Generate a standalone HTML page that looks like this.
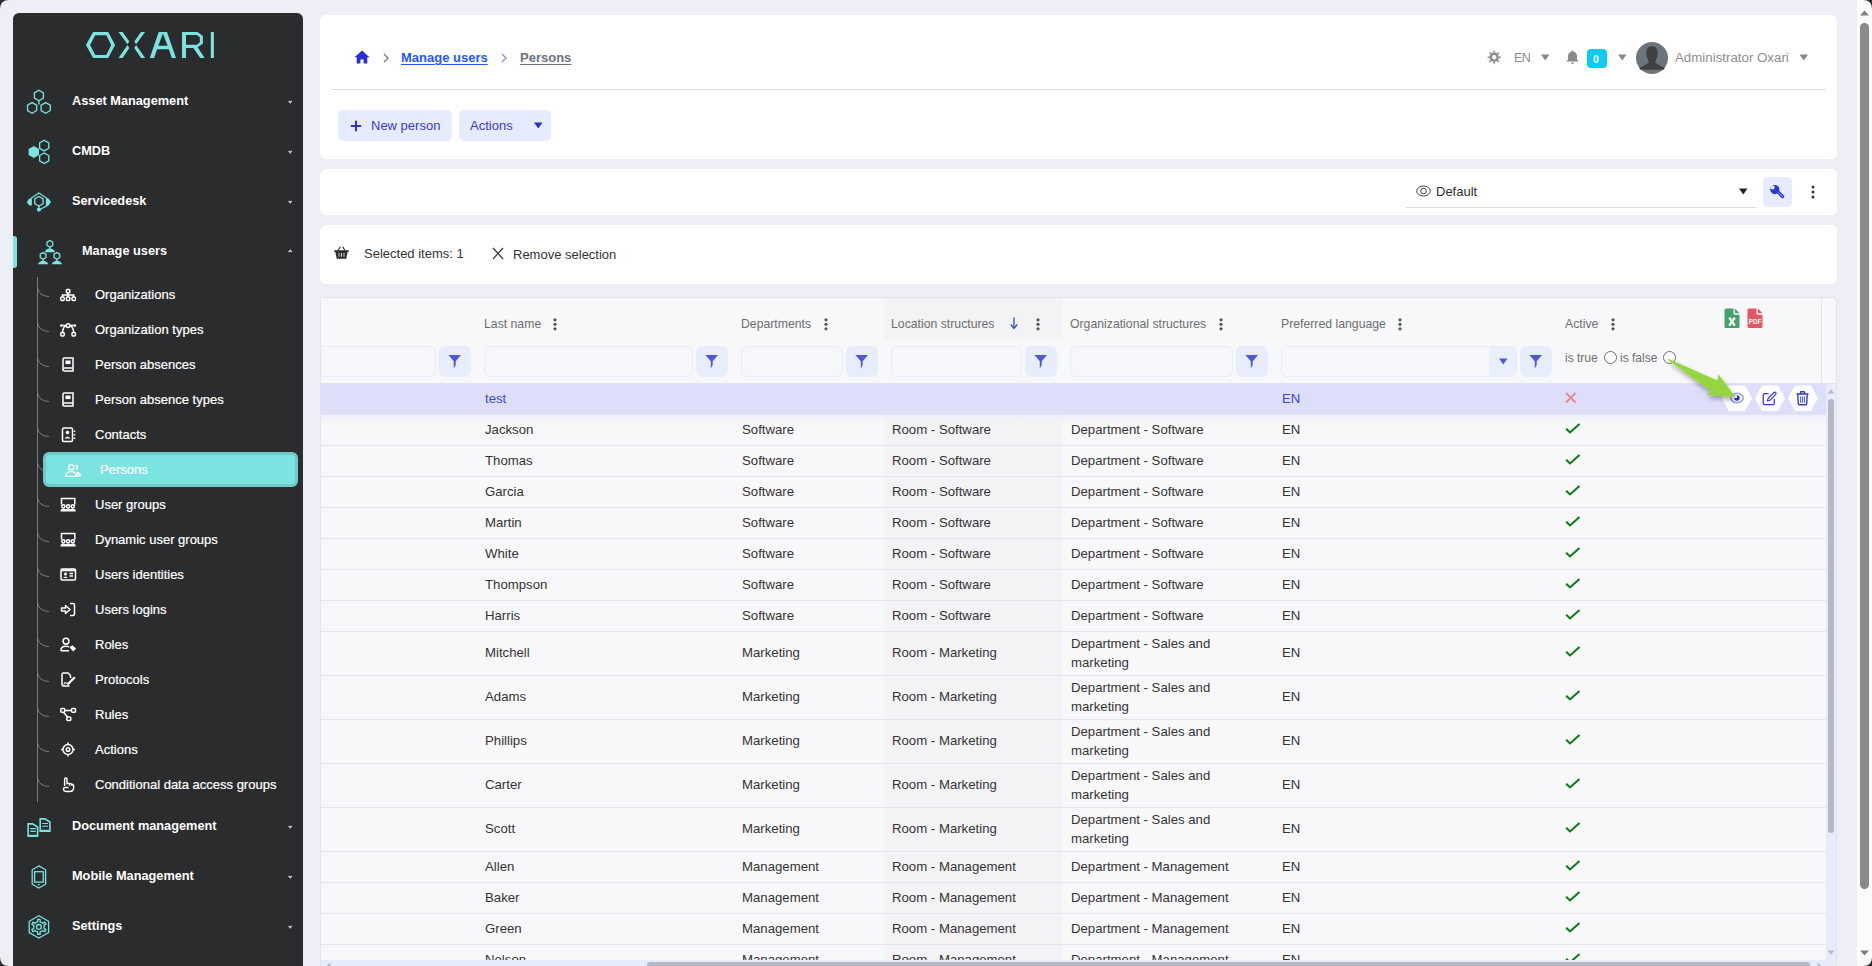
<!DOCTYPE html><html><head><meta charset='utf-8'><style>
*{box-sizing:border-box;margin:0;padding:0}
html,body{width:1872px;height:966px;overflow:hidden;background:#EEEEF6;font-family:'Liberation Sans',sans-serif}
.t{position:absolute;white-space:nowrap}
.a{position:absolute}
svg{position:absolute;overflow:visible}
</style></head><body>
<div class="a" style="left:13px;top:13px;width:290px;height:980px;background:#2B2C2E;border-radius:6px"></div>
<svg style="left:0;top:0" width="300" height="80"><path fill="#7BE3E0" fill-rule="evenodd" d="M93.1,32.05 H108.2 L115.1,45.1 L108.2,58.1 H93.1 L85.9,45.1 Z M95.2,35.2 L90.1,45.1 L95.2,54.9 H106.3 L111.2,45.1 L106.3,35.2 Z
M118.5,32.05 H122.6 L129.3,41.4 L127.5,44.2 Z M127.5,45 L129.3,48.1 L122.6,57.95 H118.5 Z
M145.1,32.05 H141.0 L134.3,41.4 L136.1,44.2 Z M136.1,45 L134.3,48.1 L141.0,57.95 H145.1 Z
M149.8,58 L158.7,31.9 H167 L176,58 H171.8 L168.8,49.3 H157.1 L154.1,58 Z M162.9,33.4 L167.6,45.7 H158.3 Z
M182,31.9 H197.5 L202.9,36.1 V43.6 L197.7,47.3 L204.7,58 H200.2 L193.3,48 H186 V58 H182 Z M186,35.1 H196.8 L199.8,37.3 V42.5 L196.8,44.7 H186 Z
M210.8,31.9 H213.9 V58 H210.8 Z"/></svg>
<div class="t" style="left:72px;top:94px;font-size:13px;line-height:13px;color:#FFFFFF;font-weight:bold;font-size:12.75px">Asset Management</div>
<svg style="left:288px;top:100px" width="5" height="4"><polyline points="0.7,0.9 2.2,2.6 3.7,0.9" fill="none" stroke="#cfcfcf" stroke-width="1.4"/></svg>
<div class="t" style="left:72px;top:144px;font-size:13px;line-height:13px;color:#FFFFFF;font-weight:bold;font-size:12.75px">CMDB</div>
<svg style="left:288px;top:150px" width="5" height="4"><polyline points="0.7,0.9 2.2,2.6 3.7,0.9" fill="none" stroke="#cfcfcf" stroke-width="1.4"/></svg>
<div class="t" style="left:72px;top:194px;font-size:13px;line-height:13px;color:#FFFFFF;font-weight:bold;font-size:12.75px">Servicedesk</div>
<svg style="left:288px;top:200px" width="5" height="4"><polyline points="0.7,0.9 2.2,2.6 3.7,0.9" fill="none" stroke="#cfcfcf" stroke-width="1.4"/></svg>
<div class="t" style="left:72px;top:819px;font-size:13px;line-height:13px;color:#FFFFFF;font-weight:bold;font-size:12.75px">Document management</div>
<svg style="left:288px;top:825px" width="5" height="4"><polyline points="0.7,0.9 2.2,2.6 3.7,0.9" fill="none" stroke="#cfcfcf" stroke-width="1.4"/></svg>
<div class="t" style="left:72px;top:869px;font-size:13px;line-height:13px;color:#FFFFFF;font-weight:bold;font-size:12.75px">Mobile Management</div>
<svg style="left:288px;top:875px" width="5" height="4"><polyline points="0.7,0.9 2.2,2.6 3.7,0.9" fill="none" stroke="#cfcfcf" stroke-width="1.4"/></svg>
<div class="t" style="left:72px;top:919px;font-size:13px;line-height:13px;color:#FFFFFF;font-weight:bold;font-size:12.75px">Settings</div>
<svg style="left:288px;top:925px" width="5" height="4"><polyline points="0.7,0.9 2.2,2.6 3.7,0.9" fill="none" stroke="#cfcfcf" stroke-width="1.4"/></svg>
<svg style="left:0;top:0" width="80" height="120"><g fill="none" stroke="#7BE3E0" stroke-width="1.3"><polygon points="43.40,98.10 38.90,100.70 34.40,98.10 34.40,92.90 38.90,90.30 43.40,92.90"/><polygon points="36.69,110.55 32.10,113.20 27.51,110.55 27.51,105.25 32.10,102.60 36.69,105.25"/><polygon points="50.29,110.55 45.70,113.20 41.11,110.55 41.11,105.25 45.70,102.60 50.29,105.25"/><path d="M38.9,100.7 V104.5"/></g></svg>
<svg style="left:0;top:0" width="80" height="170"><polygon points="39.00,154.90 33.80,157.90 28.60,154.90 28.60,148.90 33.80,145.90 39.00,148.90" fill="#7BE3E0"/><g fill="none" stroke="#7BE3E0" stroke-width="1.3"><polygon points="48.79,148.25 44.20,150.90 39.61,148.25 39.61,142.95 44.20,140.30 48.79,142.95"/><polygon points="48.79,160.85 44.20,163.50 39.61,160.85 39.61,155.55 44.20,152.90 48.79,155.55"/></g></svg>
<svg style="left:0;top:0" width="80" height="230"><g fill="none" stroke="#7BE3E0" stroke-width="1.3"><polyline points="30.8,198.5 38.9,193 47.2,198.5 47.2,205.5 38.9,210"/><polygon points="43.06,203.70 38.90,206.10 34.74,203.70 34.74,198.90 38.90,196.50 43.06,198.90"/><path d="M38.9,206 V209"/></g><g fill="#7BE3E0"><path d="M26.8,201.9 L29.3,198.4 H31.9 V205.4 H29.3z"/><path d="M51,201.9 L48.5,198.4 H45.9 V205.4 H48.5z"/><polygon points="40.81,210.70 38.90,211.80 36.99,210.70 36.99,208.50 38.90,207.40 40.81,208.50"/></g></svg>
<svg style="left:0;top:0" width="80" height="280"><g fill="none" stroke="#7BE3E0" stroke-width="1.3"><polygon points="52.76,245.45 49.90,247.10 47.04,245.45 47.04,242.15 49.90,240.50 52.76,242.15"/><polygon points="45.96,257.55 43.10,259.20 40.24,257.55 40.24,254.25 43.10,252.60 45.96,254.25"/><polygon points="59.76,257.55 56.90,259.20 54.04,257.55 54.04,254.25 56.90,252.60 59.76,254.25"/><path d="M49.9,247 V249 M43.1,259 V261 M56.9,259 V261"/></g><g fill="#7BE3E0"><path d="M44.6,252.2 Q46,248.6 49.9,248.6 Q53.8,248.6 55.2,252.2z"/><path d="M37.9,264.3 Q39.3,260.7 43.1,260.7 Q46.9,260.7 48.3,264.3z"/><path d="M51.7,264.3 Q53.1,260.7 56.9,260.7 Q60.7,260.7 62.1,264.3z"/></g></svg>
<svg style="left:0;top:0" width="80" height="850"><g fill="none" stroke="#7BE3E0" stroke-width="1.6"><path d="M28.1,823.9 H32.5 L37.6,827 V836 H28.1z"/><path d="M40.2,818.9 H44.8 L49.9,822 V831.1 H40.2z"/></g><path d="M28.1,835.8 H37.6" stroke="#7BE3E0" stroke-width="2"/><path d="M40.2,830.8 H49.9" stroke="#7BE3E0" stroke-width="2"/><g stroke="#7BE3E0" stroke-width="1.1"><path d="M30.3,828.6 H35.8 M30.3,831.4 H35.8 M42.2,823.5 H48 M42.2,826.3 H48"/></g></svg>
<svg style="left:0;top:0" width="80" height="900"><g fill="none" stroke="#7BE3E0" stroke-width="1.3"><polygon points="38.9,865.9 45.6,869.8 45.6,884.2 38.9,888 32.2,884.2 32.2,869.8"/><rect x="34.6" y="871.7" width="8.7" height="10.4"/></g><rect x="37.8" y="884" width="2.2" height="1.2" rx="0.6" fill="#7BE3E0"/></svg>
<svg style="left:0;top:0" width="80" height="950"><g fill="none" stroke="#7BE3E0" stroke-width="1.3"><polygon points="48.60,932.50 38.90,938.10 29.20,932.50 29.20,921.30 38.90,915.70 48.60,921.30"/><path d="M36.88,922.11 L37.71,921.84 L37.71,919.39 L40.09,919.39 L40.09,921.84 L40.92,922.11 L42.04,922.76 L42.69,923.34 L44.81,922.12 L46.00,924.18 L43.88,925.40 L44.06,926.25 L44.06,927.55 L43.88,928.40 L46.00,929.62 L44.81,931.68 L42.69,930.46 L42.04,931.04 L40.92,931.69 L40.09,931.96 L40.09,934.41 L37.71,934.41 L37.71,931.96 L36.88,931.69 L35.76,931.04 L35.11,930.46 L32.99,931.68 L31.80,929.62 L33.92,928.40 L33.74,927.55 L33.74,926.25 L33.92,925.40 L31.80,924.18 L32.99,922.12 L35.11,923.34 L35.76,922.76 Z" stroke-linejoin="round"/><circle cx="38.9" cy="926.9" r="2.4"/></g></svg>
<div class="a" style="left:13px;top:236px;width:4px;height:32px;background:#7BE3E0;border-radius:0 3px 3px 0"></div>
<div class="t" style="left:82px;top:244px;font-size:13px;line-height:13px;color:#FFFFFF;font-weight:bold;font-size:12.75px">Manage users</div>
<svg style="left:288px;top:249px" width="5" height="4"><polyline points="0.7,3.1 2.2,1.4 3.7,3.1" fill="none" stroke="#cfcfcf" stroke-width="1.4"/></svg>
<div class="a" style="left:37px;top:277px;width:1px;height:525px;background:#7C7C7E"></div>
<svg style="left:37px;top:286px" width="14" height="12"><path d="M0.5,1.5 Q1.5,10 12,10.6" fill="none" stroke="#7C7C7E" stroke-width="1"/></svg>
<div class="t" style="left:95px;top:288px;font-size:13px;line-height:13px;color:#FFFFFF;-webkit-text-stroke:0.2px #FFFFFF">Organizations</div>
<svg style="left:37px;top:321px" width="14" height="12"><path d="M0.5,1.5 Q1.5,10 12,10.6" fill="none" stroke="#7C7C7E" stroke-width="1"/></svg>
<div class="t" style="left:95px;top:323px;font-size:13px;line-height:13px;color:#FFFFFF;-webkit-text-stroke:0.2px #FFFFFF">Organization types</div>
<svg style="left:37px;top:356px" width="14" height="12"><path d="M0.5,1.5 Q1.5,10 12,10.6" fill="none" stroke="#7C7C7E" stroke-width="1"/></svg>
<div class="t" style="left:95px;top:358px;font-size:13px;line-height:13px;color:#FFFFFF;-webkit-text-stroke:0.2px #FFFFFF">Person absences</div>
<svg style="left:37px;top:391px" width="14" height="12"><path d="M0.5,1.5 Q1.5,10 12,10.6" fill="none" stroke="#7C7C7E" stroke-width="1"/></svg>
<div class="t" style="left:95px;top:393px;font-size:13px;line-height:13px;color:#FFFFFF;-webkit-text-stroke:0.2px #FFFFFF">Person absence types</div>
<svg style="left:37px;top:426px" width="14" height="12"><path d="M0.5,1.5 Q1.5,10 12,10.6" fill="none" stroke="#7C7C7E" stroke-width="1"/></svg>
<div class="t" style="left:95px;top:428px;font-size:13px;line-height:13px;color:#FFFFFF;-webkit-text-stroke:0.2px #FFFFFF">Contacts</div>
<svg style="left:37px;top:461px" width="14" height="12"><path d="M0.5,1.5 Q1.5,10 12,10.6" fill="none" stroke="#7C7C7E" stroke-width="1"/></svg>
<div class="a" style="left:43px;top:452px;width:255px;height:35px;background:#7BE3E0;border:3px solid #6FCBC7;border-radius:6px"></div>
<div class="t" style="left:100px;top:463px;font-size:13px;line-height:13px;color:#FFFFFF;-webkit-text-stroke:0.2px #FFFFFF">Persons</div>
<svg style="left:37px;top:496px" width="14" height="12"><path d="M0.5,1.5 Q1.5,10 12,10.6" fill="none" stroke="#7C7C7E" stroke-width="1"/></svg>
<div class="t" style="left:95px;top:498px;font-size:13px;line-height:13px;color:#FFFFFF;-webkit-text-stroke:0.2px #FFFFFF">User groups</div>
<svg style="left:37px;top:531px" width="14" height="12"><path d="M0.5,1.5 Q1.5,10 12,10.6" fill="none" stroke="#7C7C7E" stroke-width="1"/></svg>
<div class="t" style="left:95px;top:533px;font-size:13px;line-height:13px;color:#FFFFFF;-webkit-text-stroke:0.2px #FFFFFF">Dynamic user groups</div>
<svg style="left:37px;top:566px" width="14" height="12"><path d="M0.5,1.5 Q1.5,10 12,10.6" fill="none" stroke="#7C7C7E" stroke-width="1"/></svg>
<div class="t" style="left:95px;top:568px;font-size:13px;line-height:13px;color:#FFFFFF;-webkit-text-stroke:0.2px #FFFFFF">Users identities</div>
<svg style="left:37px;top:601px" width="14" height="12"><path d="M0.5,1.5 Q1.5,10 12,10.6" fill="none" stroke="#7C7C7E" stroke-width="1"/></svg>
<div class="t" style="left:95px;top:603px;font-size:13px;line-height:13px;color:#FFFFFF;-webkit-text-stroke:0.2px #FFFFFF">Users logins</div>
<svg style="left:37px;top:636px" width="14" height="12"><path d="M0.5,1.5 Q1.5,10 12,10.6" fill="none" stroke="#7C7C7E" stroke-width="1"/></svg>
<div class="t" style="left:95px;top:638px;font-size:13px;line-height:13px;color:#FFFFFF;-webkit-text-stroke:0.2px #FFFFFF">Roles</div>
<svg style="left:37px;top:671px" width="14" height="12"><path d="M0.5,1.5 Q1.5,10 12,10.6" fill="none" stroke="#7C7C7E" stroke-width="1"/></svg>
<div class="t" style="left:95px;top:673px;font-size:13px;line-height:13px;color:#FFFFFF;-webkit-text-stroke:0.2px #FFFFFF">Protocols</div>
<svg style="left:37px;top:706px" width="14" height="12"><path d="M0.5,1.5 Q1.5,10 12,10.6" fill="none" stroke="#7C7C7E" stroke-width="1"/></svg>
<div class="t" style="left:95px;top:708px;font-size:13px;line-height:13px;color:#FFFFFF;-webkit-text-stroke:0.2px #FFFFFF">Rules</div>
<svg style="left:37px;top:741px" width="14" height="12"><path d="M0.5,1.5 Q1.5,10 12,10.6" fill="none" stroke="#7C7C7E" stroke-width="1"/></svg>
<div class="t" style="left:95px;top:743px;font-size:13px;line-height:13px;color:#FFFFFF;-webkit-text-stroke:0.2px #FFFFFF">Actions</div>
<svg style="left:37px;top:776px" width="14" height="12"><path d="M0.5,1.5 Q1.5,10 12,10.6" fill="none" stroke="#7C7C7E" stroke-width="1"/></svg>
<div class="t" style="left:95px;top:778px;font-size:13px;line-height:13px;color:#FFFFFF;-webkit-text-stroke:0.2px #FFFFFF">Conditional data access groups</div>
<svg style="left:60px;top:287px" width="17" height="16"><g fill="none" stroke="#FFFFFF" stroke-width="1.5"><rect x="6.4" y="2.6" width="3.4" height="3.4" rx="0.9"/><rect x="0.8" y="10" width="3.4" height="3.4" rx="0.9"/><rect x="6.4" y="10" width="3.4" height="3.4" rx="0.9"/><rect x="12" y="10" width="3.4" height="3.4" rx="0.9"/><path d="M8.1,6 V10 M2.5,10 V8 H13.7 V10"/></g></svg>
<svg style="left:60px;top:322px" width="17" height="16"><g fill="none" stroke="#FFFFFF" stroke-width="1.5"><rect x="0.8" y="10.5" width="3.4" height="3.4" rx="0.9"/><rect x="12" y="10.5" width="3.4" height="3.4" rx="0.9"/><circle cx="8.1" cy="3.6" r="1.9"/><path d="M2.5,10.5 Q2.8,5 6.2,3.6 M13.7,10.5 Q13.4,5 10,3.6 M1.5,3.6 H6.2 M10,3.6 H14.7"/></g><circle cx="1.3" cy="3.6" r="1.3" fill="#FFFFFF"/><circle cx="14.9" cy="3.6" r="1.3" fill="#FFFFFF"/></svg>
<svg style="left:60px;top:357px" width="17" height="16"><g fill="none" stroke="#FFFFFF" stroke-width="1.5"><path d="M3,14 V2.3 Q3,1 4.3,1 H13 V11 H4.5 Q3,11 3,12.5 Q3,14 4.5,14 H13 V11"/></g><rect x="5.5" y="3.5" width="5" height="3.6" fill="#FFFFFF"/></svg>
<svg style="left:60px;top:392px" width="17" height="16"><g fill="none" stroke="#FFFFFF" stroke-width="1.5"><path d="M3,14 V2.3 Q3,1 4.3,1 H13 V11 H4.5 Q3,11 3,12.5 Q3,14 4.5,14 H13 V11"/></g><rect x="5.5" y="3.5" width="5" height="3.6" fill="#FFFFFF"/></svg>
<svg style="left:60px;top:427px" width="17" height="16"><g fill="none" stroke="#FFFFFF" stroke-width="1.5"><rect x="2.5" y="1" width="10" height="13.5" rx="1.2"/><path d="M14.5,3.5 V5 M14.5,7 V8.5 M14.5,10.5 V12"/></g><circle cx="7.5" cy="5.6" r="1.8" fill="#FFFFFF"/><path d="M4.5,11.5 Q7.5,7.5 10.5,11.5z" fill="#FFFFFF"/></svg>
<svg style="left:65px;top:463px" width="17" height="16"><path d="M10.6,1.5 A2.7,2.7 0 1 1 10.6,6.9 Q11.7,4.2 10.6,1.5z" fill="#FFFFFF"/><path d="M11.8,8.6 Q15.8,9 16.2,13.4 H12.3 Q12.2,10.5 11.8,8.6z" fill="#FFFFFF"/><g fill="none" stroke="#FFFFFF" stroke-width="1.4"><circle cx="6.2" cy="4.2" r="2.6"/><path d="M0.8,13.4 Q0.8,8.6 6.2,8.6 Q11.6,8.6 11.6,13.4z"/></g></svg>
<svg style="left:60px;top:497px" width="17" height="16"><g fill="none" stroke="#FFFFFF" stroke-width="1.5"><path d="M1.5,7.5 V1.5 H14.8 V7.5"/><circle cx="3.4" cy="9.3" r="1.6"/><circle cx="8.1" cy="9.3" r="1.6"/><circle cx="12.8" cy="9.3" r="1.6"/></g><g fill="#FFFFFF"><path d="M0.4,14.5 Q0.4,11.4 3.4,11.4 Q6.4,11.4 6.4,14.5z M5.1,14.5 Q5.1,11.4 8.1,11.4 Q11.1,11.4 11.1,14.5z M9.8,14.5 Q9.8,11.4 12.8,11.4 Q15.8,11.4 15.8,14.5z"/></g></svg>
<svg style="left:60px;top:532px" width="17" height="16"><g fill="none" stroke="#FFFFFF" stroke-width="1.5"><path d="M1.5,7.5 V1.5 H14.8 V7.5"/><circle cx="3.4" cy="9.3" r="1.6"/><circle cx="8.1" cy="9.3" r="1.6"/><circle cx="12.8" cy="9.3" r="1.6"/></g><g fill="#FFFFFF"><path d="M0.4,14.5 Q0.4,11.4 3.4,11.4 Q6.4,11.4 6.4,14.5z M5.1,14.5 Q5.1,11.4 8.1,11.4 Q11.1,11.4 11.1,14.5z M9.8,14.5 Q9.8,11.4 12.8,11.4 Q15.8,11.4 15.8,14.5z"/></g></svg>
<svg style="left:60px;top:567px" width="17" height="16"><g fill="none" stroke="#FFFFFF" stroke-width="1.5"><rect x="1" y="2" width="14.5" height="11" rx="1.2"/></g><rect x="1" y="2" width="14.5" height="2.3" fill="#FFFFFF"/><circle cx="5.5" cy="7" r="1.5" fill="#FFFFFF"/><path d="M3,11 Q5.5,8 8,11z" fill="#FFFFFF"/><path d="M9.5,6.5 H13 M9.5,9 H13" stroke="#FFFFFF" stroke-width="1.3"/></svg>
<svg style="left:60px;top:602px" width="17" height="16"><g fill="none" stroke="#FFFFFF" stroke-width="1.5"><path d="M10,1.5 H13 Q14.5,1.5 14.5,3 V12 Q14.5,13.5 13,13.5 H10"/><path d="M1.5,6 H5.5 V3.5 L10,7.5 L5.5,11.5 V9 H1.5z" stroke-linejoin="round"/></g></svg>
<svg style="left:60px;top:637px" width="17" height="16"><g fill="none" stroke="#FFFFFF" stroke-width="1.5"><circle cx="6" cy="4.2" r="2.9"/><path d="M0.8,13.8 Q0.8,9.2 6,9.2 Q8,9.2 9.2,9.8 M0.8,13.8 H9"/></g><path d="M9.5,10.2 L12.2,8.2 L16.2,11.6 L13.2,14.6z" fill="#FFFFFF"/></svg>
<svg style="left:60px;top:672px" width="17" height="16"><g fill="none" stroke="#FFFFFF" stroke-width="1.5"><path d="M9.5,14 H3.5 Q2,14 2,12.5 V2.5 Q2,1 3.5,1 H8 L10.5,3.5 V6"/></g><path d="M7.5,12.5 L14.8,5.2" stroke="#FFFFFF" stroke-width="2.3"/><path d="M3.8,12.5 Q5,9.5 6.2,11 Q7,12 8,11" fill="none" stroke="#FFFFFF" stroke-width="1.1"/></svg>
<svg style="left:60px;top:707px" width="17" height="16"><g fill="none" stroke="#FFFFFF" stroke-width="1.5"><rect x="0.8" y="1.6" width="4" height="3.6" rx="1"/><rect x="11.5" y="1.6" width="4" height="3.6" rx="1"/><rect x="6.8" y="10" width="4" height="3.6" rx="1"/><path d="M4.8,3.4 H11.5 M3.5,5.2 L7.5,10"/></g></svg>
<svg style="left:60px;top:742px" width="17" height="16"><g fill="none" stroke="#FFFFFF" stroke-width="1.5"><circle cx="8" cy="7.5" r="5"/><circle cx="8" cy="7.5" r="1.8"/><path d="M8,0.5 V2.5 M8,12.5 V14.5 M1,7.5 H3 M13,7.5 H15"/></g></svg>
<svg style="left:60px;top:777px" width="17" height="16"><g fill="none" stroke="#FFFFFF" stroke-width="1.4"><path d="M4.6,9 V2.3 Q4.6,1 5.8,1 Q7,1 7,2.3 V6.5 Q8.5,6 9.5,6.8 Q11,6.3 12,7.3 Q13.6,7.2 13.6,9 V11 Q13.6,14.5 9.5,14.5 H7 Q3.4,14.5 3.4,12 Q3.4,10.5 5,10.5 H8.5"/><path d="M9.5,6.8 V8.8 M12,7.3 V9"/></g></svg>
<div class="a" style="left:320px;top:15px;width:1517px;height:144px;background:#FFFFFF;border-radius:6px"></div>
<svg style="left:354px;top:50px" width="16" height="14"><path d="M8,0.5 L15.5,7.2 H13.3 V13.5 H9.6 V9.5 H6.4 V13.5 H2.7 V7.2 H0.5z" fill="#2B2FD4"/></svg>
<svg style="left:383px;top:53px" width="6" height="10"><polyline points="1,1 5,5 1,9" fill="none" stroke="#777" stroke-width="1.3"/></svg>
<div class="t" style="left:401px;top:51px;font-size:13px;line-height:13px;color:#1F5AF6;font-weight:bold;text-decoration:underline;text-underline-offset:2px">Manage users</div>
<svg style="left:501px;top:53px" width="6" height="10"><polyline points="1,1 5,5 1,9" fill="none" stroke="#8B8BEA" stroke-width="1.3"/></svg>
<div class="t" style="left:520px;top:51px;font-size:13px;line-height:13px;color:#69727D;font-weight:bold;text-decoration:underline;text-underline-offset:2px">Persons</div>
<div class="a" style="left:331px;top:89px;width:1495px;height:1px;background:#DCDFE4"></div>
<svg style="left:1487px;top:50px" width="15" height="15"><g fill="#8A8A8A"><circle cx="7.2" cy="7.2" r="4.6"/><path d="M7.2,0 L8.5,2.5 L5.9,2.5z M7.2,14.4 L8.5,11.9 L5.9,11.9z M0,7.2 L2.5,5.9 L2.5,8.5z M14.4,7.2 L11.9,5.9 L11.9,8.5z M2.1,2.1 L4.8,2.9 L2.9,4.8z M12.3,12.3 L9.6,11.5 L11.5,9.6z M12.3,2.1 L11.5,4.8 L9.6,2.9z M2.1,12.3 L2.9,9.6 L4.8,11.5z"/></g><circle cx="7.2" cy="7.2" r="2.2" fill="#fff"/></svg>
<div class="t" style="left:1514px;top:52px;font-size:13px;line-height:13px;color:#8C8C8C;font-size:12.5px;letter-spacing:-0.6px">EN</div>
<svg style="left:1541px;top:54px" width="9" height="7"><polygon points="0,0.5 8.5,0.5 4.25,6.5" fill="#888"/></svg>
<svg style="left:1566px;top:50px" width="13" height="15"><path d="M6.5,0.5 Q7.5,0.5 7.5,1.6 Q11,2.5 11,6.5 V9.5 L12.5,11.5 H0.5 L2,9.5 V6.5 Q2,2.5 5.5,1.6 Q5.5,0.5 6.5,0.5z M5,12.5 H8 Q8,14 6.5,14 Q5,14 5,12.5z" fill="#8A8A8A"/></svg>
<div class="a" style="left:1587px;top:49px;width:20px;height:19px;background:#0DCAF0;border-radius:4px"></div>
<div class="t" style="left:1593px;top:53px;font-size:12px;line-height:12px;color:#FFFFFF;font-weight:bold;font-size:10.5px">0</div>
<svg style="left:1618px;top:54px" width="9" height="7"><polygon points="0,0.5 8.5,0.5 4.25,6.5" fill="#888"/></svg>
<svg style="left:1636px;top:42px" width="32" height="32"><circle cx="16" cy="16" r="16" fill="#6C747C"/><path d="M16,3.9 Q21.7,3.9 21.7,11 Q21.7,14.5 20.5,16.5 Q19.5,18.5 19.3,20.8 L28.8,26.2 Q28,27 27.4,27.7 H4.6 Q4,27 3.2,26.2 L12.7,20.8 Q12.5,18.5 11.5,16.5 Q10.3,14.5 10.3,11 Q10.3,3.9 16,3.9z" fill="#404040"/></svg>
<div class="t" style="left:1675px;top:51px;font-size:13px;line-height:13px;color:#8E8E8E;font-size:13.3px">Administrator Oxari</div>
<svg style="left:1799px;top:54px" width="10" height="7"><polygon points="0.5,0.5 9,0.5 4.75,6.5" fill="#888"/></svg>
<div class="a" style="left:338px;top:110px;width:114px;height:31px;background:#E6EBFD;border-radius:5px"></div>
<svg style="left:350px;top:120px" width="12" height="12"><path d="M6,0.8 V11.2 M0.8,6 H11.2" stroke="#2D31C8" stroke-width="2"/></svg>
<div class="t" style="left:371px;top:119px;font-size:13px;line-height:13px;color:#3B3BC6;">New person</div>
<div class="a" style="left:459px;top:110px;width:92px;height:31px;background:#E6EBFD;border-radius:5px"></div>
<div class="t" style="left:470px;top:119px;font-size:13px;line-height:13px;color:#3B3BC6;">Actions</div>
<svg style="left:534px;top:122px" width="9" height="7"><polygon points="0,0.5 8.5,0.5 4.25,6.5" fill="#2D31C8"/></svg>
<div class="a" style="left:320px;top:169px;width:1517px;height:46px;background:#FFFFFF;border-radius:6px"></div>
<svg style="left:1416px;top:185px" width="16" height="13"><ellipse cx="7.5" cy="6" rx="6.8" ry="5" fill="none" stroke="#444" stroke-width="1"/><circle cx="7.5" cy="6" r="2.8" fill="none" stroke="#444" stroke-width="1"/></svg>
<div class="t" style="left:1436px;top:185px;font-size:13px;line-height:13px;color:#2E2E2E;">Default</div>
<svg style="left:1739px;top:188px" width="9" height="7"><polygon points="0,0.5 8.5,0.5 4.25,6.5" fill="#222"/></svg>
<div class="a" style="left:1406px;top:207px;width:350px;height:1px;background:#D9DCE1"></div>
<div class="a" style="left:1763px;top:177px;width:29px;height:30px;background:#E6EBFD;border-radius:5px"></div>
<svg style="left:1769px;top:184px" width="17" height="17"><path d="M8.2,8.6 L12.7,13.3 Q13.5,14.1 14.3,13.3 Q15.1,12.5 14.3,11.7 L9.6,7.2" fill="#8A90E4" stroke="#2E36D0" stroke-width="1.2"/><circle cx="5.8" cy="5.6" r="4.6" fill="#2E36D0"/><circle cx="3.6" cy="3.4" r="2" fill="#E6EBFD"/></svg>
<svg style="left:1811px;top:185px" width="4" height="14"><circle cx="2" cy="2" r="1.5" fill="#333"/><circle cx="2" cy="7" r="1.5" fill="#333"/><circle cx="2" cy="12" r="1.5" fill="#333"/></svg>
<div class="a" style="left:320px;top:225px;width:1517px;height:59px;background:#FFFFFF;border-radius:6px"></div>
<svg style="left:334px;top:246px" width="15" height="14"><path d="M4,4.5 L6.3,0.8 M11,4.5 L8.7,0.8" stroke="#2A2D33" stroke-width="1.1" fill="none"/><path d="M0.3,4.2 H14.7 V6 H13.6 L12.3,12.7 H2.7 L1.4,6 H0.3z" fill="#2A2D33"/><path d="M5,7 V10.8 M7.5,7 V10.8 M10,7 V10.8" stroke="#E3D9A8" stroke-width="1"/></svg>
<div class="t" style="left:364px;top:247px;font-size:13px;line-height:13px;color:#333;">Selected items: 1</div>
<svg style="left:492px;top:247px" width="12" height="13"><path d="M1,1 L11,12 M11,1 L1,12" stroke="#333" stroke-width="1.2"/></svg>
<div class="t" style="left:513px;top:248px;font-size:13px;line-height:13px;color:#333;">Remove selection</div>
<div class="a" style="left:320px;top:297px;width:1517px;height:700px;background:#F8F8FA;border:1px solid #E1E3E8;border-radius:5px 5px 0 0"></div>
<div class="a" style="left:321px;top:298px;width:1505px;height:85px;background:#F7F8FA"></div>
<div class="a" style="left:884px;top:298px;width:179px;height:41px;background:#F2F3F5"></div>
<div class="a" style="left:1821px;top:298px;width:1px;height:85px;background:#E3E4E8"></div>
<div class="a" style="left:321px;top:383px;width:1515px;height:1px;background:#E2E3E7"></div>
<div class="t" style="left:484px;top:318px;font-size:12px;line-height:12px;color:#6E6E6E;font-size:12.25px">Last name</div>
<svg style="left:553px;top:318px" width="4" height="13"><circle cx="2" cy="1.8" r="1.6" fill="#555"/><circle cx="2" cy="6.3" r="1.6" fill="#555"/><circle cx="2" cy="10.8" r="1.6" fill="#555"/></svg>
<div class="t" style="left:741px;top:318px;font-size:12px;line-height:12px;color:#6E6E6E;font-size:12.25px">Departments</div>
<svg style="left:824px;top:318px" width="4" height="13"><circle cx="2" cy="1.8" r="1.6" fill="#555"/><circle cx="2" cy="6.3" r="1.6" fill="#555"/><circle cx="2" cy="10.8" r="1.6" fill="#555"/></svg>
<div class="t" style="left:891px;top:318px;font-size:12px;line-height:12px;color:#6E6E6E;font-size:12.25px">Location structures</div>
<svg style="left:1036px;top:318px" width="4" height="13"><circle cx="2" cy="1.8" r="1.6" fill="#555"/><circle cx="2" cy="6.3" r="1.6" fill="#555"/><circle cx="2" cy="10.8" r="1.6" fill="#555"/></svg>
<div class="t" style="left:1070px;top:318px;font-size:12px;line-height:12px;color:#6E6E6E;font-size:12.25px">Organizational structures</div>
<svg style="left:1219px;top:318px" width="4" height="13"><circle cx="2" cy="1.8" r="1.6" fill="#555"/><circle cx="2" cy="6.3" r="1.6" fill="#555"/><circle cx="2" cy="10.8" r="1.6" fill="#555"/></svg>
<div class="t" style="left:1281px;top:318px;font-size:12px;line-height:12px;color:#6E6E6E;font-size:12.25px">Preferred language</div>
<svg style="left:1398px;top:318px" width="4" height="13"><circle cx="2" cy="1.8" r="1.6" fill="#555"/><circle cx="2" cy="6.3" r="1.6" fill="#555"/><circle cx="2" cy="10.8" r="1.6" fill="#555"/></svg>
<div class="t" style="left:1565px;top:318px;font-size:12px;line-height:12px;color:#6E6E6E;font-size:12.25px">Active</div>
<svg style="left:1611px;top:318px" width="4" height="13"><circle cx="2" cy="1.8" r="1.6" fill="#555"/><circle cx="2" cy="6.3" r="1.6" fill="#555"/><circle cx="2" cy="10.8" r="1.6" fill="#555"/></svg>
<svg style="left:1010px;top:317px" width="8" height="13"><path d="M4,0.5 V11" stroke="#3A46D6" stroke-width="1.3"/><path d="M0.8,7.5 L4,11.5 L7.2,7.5" fill="none" stroke="#3A46D6" stroke-width="1.3"/></svg>
<div class="a" style="left:321px;top:346px;width:115px;height:31px;background:#F5F7FB;border:1px solid #E6ECFB;border-left:none;border-radius:0 6px 6px 0"></div>
<div class="a" style="left:439px;top:346px;width:32px;height:31px;background:#E8EDFC;border-radius:6px"></div>
<svg style="left:448px;top:354px" width="15" height="16"><path d="M0.4,1 H13 L7.7,7.2 V11 L5.8,14.4 V7.2z" fill="#4E58D8"/></svg>
<div class="a" style="left:484px;top:346px;width:209px;height:31px;background:#F5F7FB;border:1px solid #E6ECFB;border-radius:6px"></div>
<div class="a" style="left:696px;top:346px;width:32px;height:31px;background:#E8EDFC;border-radius:6px"></div>
<svg style="left:705px;top:354px" width="15" height="16"><path d="M0.4,1 H13 L7.7,7.2 V11 L5.8,14.4 V7.2z" fill="#4E58D8"/></svg>
<div class="a" style="left:741px;top:346px;width:102px;height:31px;background:#F5F7FB;border:1px solid #E6ECFB;border-radius:6px"></div>
<div class="a" style="left:846px;top:346px;width:32px;height:31px;background:#E8EDFC;border-radius:6px"></div>
<svg style="left:855px;top:354px" width="15" height="16"><path d="M0.4,1 H13 L7.7,7.2 V11 L5.8,14.4 V7.2z" fill="#4E58D8"/></svg>
<div class="a" style="left:891px;top:346px;width:131px;height:31px;background:#F5F7FB;border:1px solid #E6ECFB;border-radius:6px"></div>
<div class="a" style="left:1025px;top:346px;width:32px;height:31px;background:#E8EDFC;border-radius:6px"></div>
<svg style="left:1034px;top:354px" width="15" height="16"><path d="M0.4,1 H13 L7.7,7.2 V11 L5.8,14.4 V7.2z" fill="#4E58D8"/></svg>
<div class="a" style="left:1070px;top:346px;width:163px;height:31px;background:#F5F7FB;border:1px solid #E6ECFB;border-radius:6px"></div>
<div class="a" style="left:1236px;top:346px;width:32px;height:31px;background:#E8EDFC;border-radius:6px"></div>
<svg style="left:1245px;top:354px" width="15" height="16"><path d="M0.4,1 H13 L7.7,7.2 V11 L5.8,14.4 V7.2z" fill="#4E58D8"/></svg>
<div class="a" style="left:1281px;top:346px;width:236px;height:31px;background:#F5F7FB;border:1px solid #E6ECFB;border-radius:6px"></div>
<div class="a" style="left:1489px;top:347px;width:27px;height:29px;background:#EAEFFC;border-radius:0 5px 5px 0"></div>
<svg style="left:1499px;top:358px" width="9" height="7"><polygon points="0,0.5 8.5,0.5 4.25,6.5" fill="#4E58D8"/></svg>
<div class="a" style="left:1520px;top:346px;width:32px;height:31px;background:#E8EDFC;border-radius:6px"></div>
<svg style="left:1529px;top:354px" width="15" height="16"><path d="M0.4,1 H13 L7.7,7.2 V11 L5.8,14.4 V7.2z" fill="#4E58D8"/></svg>
<div class="t" style="left:1565px;top:352px;font-size:12px;line-height:12px;color:#6E6E6E;">is true</div>
<div class="a" style="left:1604px;top:351px;width:13px;height:13px;border:1px solid #707070;border-radius:50%;background:#fff"></div>
<div class="t" style="left:1620px;top:352px;font-size:12px;line-height:12px;color:#6E6E6E;">is false</div>
<div class="a" style="left:1663px;top:351px;width:13px;height:13px;border:1px solid #707070;border-radius:50%;background:#fff"></div>
<svg style="left:1724px;top:308px" width="17" height="21"><path d="M1.8,0.5 H9.5 V5.5 Q9.5,6.8 10.8,6.8 H15.5 V18.5 Q15.5,20 14,20 H1.8 Q0.5,20 0.5,18.5 V2 Q0.5,0.5 1.8,0.5z M10.8,0.5 L15.5,5.3 H11.5 Q10.8,5.3 10.8,4.6z" fill="#46A070"/><path d="M5.2,9.6 L10.8,17.6 M10.8,9.6 L5.2,17.6" stroke="#fff" stroke-width="2.3"/></svg>
<svg style="left:1747px;top:308px" width="17" height="21"><path d="M1.8,0.5 H9.5 V5.5 Q9.5,6.8 10.8,6.8 H15.5 V18.5 Q15.5,20 14,20 H1.8 Q0.5,20 0.5,18.5 V2 Q0.5,0.5 1.8,0.5z M10.8,0.5 L15.5,5.3 H11.5 Q10.8,5.3 10.8,4.6z" fill="#E25866"/><text x="1.8" y="16" font-family="Liberation Sans" font-weight="bold" font-size="7.4" fill="#fff" textLength="12.6" lengthAdjust="spacingAndGlyphs">PDF</text></svg>
<div class="a" style="left:321px;top:384px;width:1505px;height:30px;background:#DCDEFA"></div>
<div class="a" style="left:321px;top:414px;width:1505px;height:1px;background:#E4E5E9"></div>
<div class="t" style="left:485px;top:392px;font-size:13px;line-height:13px;color:#4047CF;font-size:13.2px">test</div>
<div class="t" style="left:1282px;top:392px;font-size:13px;line-height:13px;color:#4047CF;font-size:13.2px">EN</div>
<svg style="left:1565px;top:392px" width="12" height="12"><path d="M1,1 L10.5,10.5 M10.5,1 L1,10.5" stroke="#E9858F" stroke-width="1.8"/></svg>
<div class="a" style="left:321px;top:415px;width:1505px;height:30px;background:#F8F8FA"></div>
<div class="a" style="left:884px;top:415px;width:179px;height:30px;background:#F3F3F6"></div>
<div class="a" style="left:321px;top:445px;width:1505px;height:1px;background:#E4E5E9"></div>
<div class="t" style="left:485px;top:423px;font-size:13px;line-height:13px;color:#333;font-size:13.2px">Jackson</div>
<div class="t" style="left:742px;top:423px;font-size:13px;line-height:13px;color:#333;font-size:13.2px">Software</div>
<div class="t" style="left:892px;top:423px;font-size:13px;line-height:13px;color:#333;font-size:13.2px">Room - Software</div>
<div class="t" style="left:1071px;top:423px;font-size:13px;line-height:13px;color:#333;font-size:13.2px">Department - Software</div>
<div class="t" style="left:1282px;top:423px;font-size:13px;line-height:13px;color:#333;font-size:13.2px">EN</div>
<svg style="left:1565px;top:423px" width="16" height="12"><polyline points="1.2,5.8 5,9.5 14.5,1" fill="none" stroke="#0A7A14" stroke-width="2"/></svg>
<div class="a" style="left:321px;top:446px;width:1505px;height:30px;background:#F8F8FA"></div>
<div class="a" style="left:884px;top:446px;width:179px;height:30px;background:#F3F3F6"></div>
<div class="a" style="left:321px;top:476px;width:1505px;height:1px;background:#E4E5E9"></div>
<div class="t" style="left:485px;top:454px;font-size:13px;line-height:13px;color:#333;font-size:13.2px">Thomas</div>
<div class="t" style="left:742px;top:454px;font-size:13px;line-height:13px;color:#333;font-size:13.2px">Software</div>
<div class="t" style="left:892px;top:454px;font-size:13px;line-height:13px;color:#333;font-size:13.2px">Room - Software</div>
<div class="t" style="left:1071px;top:454px;font-size:13px;line-height:13px;color:#333;font-size:13.2px">Department - Software</div>
<div class="t" style="left:1282px;top:454px;font-size:13px;line-height:13px;color:#333;font-size:13.2px">EN</div>
<svg style="left:1565px;top:454px" width="16" height="12"><polyline points="1.2,5.8 5,9.5 14.5,1" fill="none" stroke="#0A7A14" stroke-width="2"/></svg>
<div class="a" style="left:321px;top:477px;width:1505px;height:30px;background:#F8F8FA"></div>
<div class="a" style="left:884px;top:477px;width:179px;height:30px;background:#F3F3F6"></div>
<div class="a" style="left:321px;top:507px;width:1505px;height:1px;background:#E4E5E9"></div>
<div class="t" style="left:485px;top:485px;font-size:13px;line-height:13px;color:#333;font-size:13.2px">Garcia</div>
<div class="t" style="left:742px;top:485px;font-size:13px;line-height:13px;color:#333;font-size:13.2px">Software</div>
<div class="t" style="left:892px;top:485px;font-size:13px;line-height:13px;color:#333;font-size:13.2px">Room - Software</div>
<div class="t" style="left:1071px;top:485px;font-size:13px;line-height:13px;color:#333;font-size:13.2px">Department - Software</div>
<div class="t" style="left:1282px;top:485px;font-size:13px;line-height:13px;color:#333;font-size:13.2px">EN</div>
<svg style="left:1565px;top:485px" width="16" height="12"><polyline points="1.2,5.8 5,9.5 14.5,1" fill="none" stroke="#0A7A14" stroke-width="2"/></svg>
<div class="a" style="left:321px;top:508px;width:1505px;height:30px;background:#F8F8FA"></div>
<div class="a" style="left:884px;top:508px;width:179px;height:30px;background:#F3F3F6"></div>
<div class="a" style="left:321px;top:538px;width:1505px;height:1px;background:#E4E5E9"></div>
<div class="t" style="left:485px;top:516px;font-size:13px;line-height:13px;color:#333;font-size:13.2px">Martin</div>
<div class="t" style="left:742px;top:516px;font-size:13px;line-height:13px;color:#333;font-size:13.2px">Software</div>
<div class="t" style="left:892px;top:516px;font-size:13px;line-height:13px;color:#333;font-size:13.2px">Room - Software</div>
<div class="t" style="left:1071px;top:516px;font-size:13px;line-height:13px;color:#333;font-size:13.2px">Department - Software</div>
<div class="t" style="left:1282px;top:516px;font-size:13px;line-height:13px;color:#333;font-size:13.2px">EN</div>
<svg style="left:1565px;top:516px" width="16" height="12"><polyline points="1.2,5.8 5,9.5 14.5,1" fill="none" stroke="#0A7A14" stroke-width="2"/></svg>
<div class="a" style="left:321px;top:539px;width:1505px;height:30px;background:#F8F8FA"></div>
<div class="a" style="left:884px;top:539px;width:179px;height:30px;background:#F3F3F6"></div>
<div class="a" style="left:321px;top:569px;width:1505px;height:1px;background:#E4E5E9"></div>
<div class="t" style="left:485px;top:547px;font-size:13px;line-height:13px;color:#333;font-size:13.2px">White</div>
<div class="t" style="left:742px;top:547px;font-size:13px;line-height:13px;color:#333;font-size:13.2px">Software</div>
<div class="t" style="left:892px;top:547px;font-size:13px;line-height:13px;color:#333;font-size:13.2px">Room - Software</div>
<div class="t" style="left:1071px;top:547px;font-size:13px;line-height:13px;color:#333;font-size:13.2px">Department - Software</div>
<div class="t" style="left:1282px;top:547px;font-size:13px;line-height:13px;color:#333;font-size:13.2px">EN</div>
<svg style="left:1565px;top:547px" width="16" height="12"><polyline points="1.2,5.8 5,9.5 14.5,1" fill="none" stroke="#0A7A14" stroke-width="2"/></svg>
<div class="a" style="left:321px;top:570px;width:1505px;height:30px;background:#F8F8FA"></div>
<div class="a" style="left:884px;top:570px;width:179px;height:30px;background:#F3F3F6"></div>
<div class="a" style="left:321px;top:600px;width:1505px;height:1px;background:#E4E5E9"></div>
<div class="t" style="left:485px;top:578px;font-size:13px;line-height:13px;color:#333;font-size:13.2px">Thompson</div>
<div class="t" style="left:742px;top:578px;font-size:13px;line-height:13px;color:#333;font-size:13.2px">Software</div>
<div class="t" style="left:892px;top:578px;font-size:13px;line-height:13px;color:#333;font-size:13.2px">Room - Software</div>
<div class="t" style="left:1071px;top:578px;font-size:13px;line-height:13px;color:#333;font-size:13.2px">Department - Software</div>
<div class="t" style="left:1282px;top:578px;font-size:13px;line-height:13px;color:#333;font-size:13.2px">EN</div>
<svg style="left:1565px;top:578px" width="16" height="12"><polyline points="1.2,5.8 5,9.5 14.5,1" fill="none" stroke="#0A7A14" stroke-width="2"/></svg>
<div class="a" style="left:321px;top:601px;width:1505px;height:30px;background:#F8F8FA"></div>
<div class="a" style="left:884px;top:601px;width:179px;height:30px;background:#F3F3F6"></div>
<div class="a" style="left:321px;top:631px;width:1505px;height:1px;background:#E4E5E9"></div>
<div class="t" style="left:485px;top:609px;font-size:13px;line-height:13px;color:#333;font-size:13.2px">Harris</div>
<div class="t" style="left:742px;top:609px;font-size:13px;line-height:13px;color:#333;font-size:13.2px">Software</div>
<div class="t" style="left:892px;top:609px;font-size:13px;line-height:13px;color:#333;font-size:13.2px">Room - Software</div>
<div class="t" style="left:1071px;top:609px;font-size:13px;line-height:13px;color:#333;font-size:13.2px">Department - Software</div>
<div class="t" style="left:1282px;top:609px;font-size:13px;line-height:13px;color:#333;font-size:13.2px">EN</div>
<svg style="left:1565px;top:609px" width="16" height="12"><polyline points="1.2,5.8 5,9.5 14.5,1" fill="none" stroke="#0A7A14" stroke-width="2"/></svg>
<div class="a" style="left:321px;top:632px;width:1505px;height:43px;background:#F8F8FA"></div>
<div class="a" style="left:884px;top:632px;width:179px;height:43px;background:#F3F3F6"></div>
<div class="a" style="left:321px;top:675px;width:1505px;height:1px;background:#E4E5E9"></div>
<div class="t" style="left:485px;top:646px;font-size:13px;line-height:13px;color:#333;font-size:13.2px">Mitchell</div>
<div class="t" style="left:742px;top:646px;font-size:13px;line-height:13px;color:#333;font-size:13.2px">Marketing</div>
<div class="t" style="left:892px;top:646px;font-size:13px;line-height:13px;color:#333;font-size:13.2px">Room - Marketing</div>
<div class="t" style="left:1071px;top:634px;font-size:13.2px;line-height:19px;color:#333">Department - Sales and<br>marketing</div>
<div class="t" style="left:1282px;top:646px;font-size:13px;line-height:13px;color:#333;font-size:13.2px">EN</div>
<svg style="left:1565px;top:646px" width="16" height="12"><polyline points="1.2,5.8 5,9.5 14.5,1" fill="none" stroke="#0A7A14" stroke-width="2"/></svg>
<div class="a" style="left:321px;top:676px;width:1505px;height:43px;background:#F8F8FA"></div>
<div class="a" style="left:884px;top:676px;width:179px;height:43px;background:#F3F3F6"></div>
<div class="a" style="left:321px;top:719px;width:1505px;height:1px;background:#E4E5E9"></div>
<div class="t" style="left:485px;top:690px;font-size:13px;line-height:13px;color:#333;font-size:13.2px">Adams</div>
<div class="t" style="left:742px;top:690px;font-size:13px;line-height:13px;color:#333;font-size:13.2px">Marketing</div>
<div class="t" style="left:892px;top:690px;font-size:13px;line-height:13px;color:#333;font-size:13.2px">Room - Marketing</div>
<div class="t" style="left:1071px;top:678px;font-size:13.2px;line-height:19px;color:#333">Department - Sales and<br>marketing</div>
<div class="t" style="left:1282px;top:690px;font-size:13px;line-height:13px;color:#333;font-size:13.2px">EN</div>
<svg style="left:1565px;top:690px" width="16" height="12"><polyline points="1.2,5.8 5,9.5 14.5,1" fill="none" stroke="#0A7A14" stroke-width="2"/></svg>
<div class="a" style="left:321px;top:720px;width:1505px;height:43px;background:#F8F8FA"></div>
<div class="a" style="left:884px;top:720px;width:179px;height:43px;background:#F3F3F6"></div>
<div class="a" style="left:321px;top:763px;width:1505px;height:1px;background:#E4E5E9"></div>
<div class="t" style="left:485px;top:734px;font-size:13px;line-height:13px;color:#333;font-size:13.2px">Phillips</div>
<div class="t" style="left:742px;top:734px;font-size:13px;line-height:13px;color:#333;font-size:13.2px">Marketing</div>
<div class="t" style="left:892px;top:734px;font-size:13px;line-height:13px;color:#333;font-size:13.2px">Room - Marketing</div>
<div class="t" style="left:1071px;top:722px;font-size:13.2px;line-height:19px;color:#333">Department - Sales and<br>marketing</div>
<div class="t" style="left:1282px;top:734px;font-size:13px;line-height:13px;color:#333;font-size:13.2px">EN</div>
<svg style="left:1565px;top:734px" width="16" height="12"><polyline points="1.2,5.8 5,9.5 14.5,1" fill="none" stroke="#0A7A14" stroke-width="2"/></svg>
<div class="a" style="left:321px;top:764px;width:1505px;height:43px;background:#F8F8FA"></div>
<div class="a" style="left:884px;top:764px;width:179px;height:43px;background:#F3F3F6"></div>
<div class="a" style="left:321px;top:807px;width:1505px;height:1px;background:#E4E5E9"></div>
<div class="t" style="left:485px;top:778px;font-size:13px;line-height:13px;color:#333;font-size:13.2px">Carter</div>
<div class="t" style="left:742px;top:778px;font-size:13px;line-height:13px;color:#333;font-size:13.2px">Marketing</div>
<div class="t" style="left:892px;top:778px;font-size:13px;line-height:13px;color:#333;font-size:13.2px">Room - Marketing</div>
<div class="t" style="left:1071px;top:766px;font-size:13.2px;line-height:19px;color:#333">Department - Sales and<br>marketing</div>
<div class="t" style="left:1282px;top:778px;font-size:13px;line-height:13px;color:#333;font-size:13.2px">EN</div>
<svg style="left:1565px;top:778px" width="16" height="12"><polyline points="1.2,5.8 5,9.5 14.5,1" fill="none" stroke="#0A7A14" stroke-width="2"/></svg>
<div class="a" style="left:321px;top:808px;width:1505px;height:43px;background:#F8F8FA"></div>
<div class="a" style="left:884px;top:808px;width:179px;height:43px;background:#F3F3F6"></div>
<div class="a" style="left:321px;top:851px;width:1505px;height:1px;background:#E4E5E9"></div>
<div class="t" style="left:485px;top:822px;font-size:13px;line-height:13px;color:#333;font-size:13.2px">Scott</div>
<div class="t" style="left:742px;top:822px;font-size:13px;line-height:13px;color:#333;font-size:13.2px">Marketing</div>
<div class="t" style="left:892px;top:822px;font-size:13px;line-height:13px;color:#333;font-size:13.2px">Room - Marketing</div>
<div class="t" style="left:1071px;top:810px;font-size:13.2px;line-height:19px;color:#333">Department - Sales and<br>marketing</div>
<div class="t" style="left:1282px;top:822px;font-size:13px;line-height:13px;color:#333;font-size:13.2px">EN</div>
<svg style="left:1565px;top:822px" width="16" height="12"><polyline points="1.2,5.8 5,9.5 14.5,1" fill="none" stroke="#0A7A14" stroke-width="2"/></svg>
<div class="a" style="left:321px;top:852px;width:1505px;height:30px;background:#F8F8FA"></div>
<div class="a" style="left:884px;top:852px;width:179px;height:30px;background:#F3F3F6"></div>
<div class="a" style="left:321px;top:882px;width:1505px;height:1px;background:#E4E5E9"></div>
<div class="t" style="left:485px;top:860px;font-size:13px;line-height:13px;color:#333;font-size:13.2px">Allen</div>
<div class="t" style="left:742px;top:860px;font-size:13px;line-height:13px;color:#333;font-size:13.2px">Management</div>
<div class="t" style="left:892px;top:860px;font-size:13px;line-height:13px;color:#333;font-size:13.2px">Room - Management</div>
<div class="t" style="left:1071px;top:860px;font-size:13px;line-height:13px;color:#333;font-size:13.2px">Department - Management</div>
<div class="t" style="left:1282px;top:860px;font-size:13px;line-height:13px;color:#333;font-size:13.2px">EN</div>
<svg style="left:1565px;top:860px" width="16" height="12"><polyline points="1.2,5.8 5,9.5 14.5,1" fill="none" stroke="#0A7A14" stroke-width="2"/></svg>
<div class="a" style="left:321px;top:883px;width:1505px;height:30px;background:#F8F8FA"></div>
<div class="a" style="left:884px;top:883px;width:179px;height:30px;background:#F3F3F6"></div>
<div class="a" style="left:321px;top:913px;width:1505px;height:1px;background:#E4E5E9"></div>
<div class="t" style="left:485px;top:891px;font-size:13px;line-height:13px;color:#333;font-size:13.2px">Baker</div>
<div class="t" style="left:742px;top:891px;font-size:13px;line-height:13px;color:#333;font-size:13.2px">Management</div>
<div class="t" style="left:892px;top:891px;font-size:13px;line-height:13px;color:#333;font-size:13.2px">Room - Management</div>
<div class="t" style="left:1071px;top:891px;font-size:13px;line-height:13px;color:#333;font-size:13.2px">Department - Management</div>
<div class="t" style="left:1282px;top:891px;font-size:13px;line-height:13px;color:#333;font-size:13.2px">EN</div>
<svg style="left:1565px;top:891px" width="16" height="12"><polyline points="1.2,5.8 5,9.5 14.5,1" fill="none" stroke="#0A7A14" stroke-width="2"/></svg>
<div class="a" style="left:321px;top:914px;width:1505px;height:30px;background:#F8F8FA"></div>
<div class="a" style="left:884px;top:914px;width:179px;height:30px;background:#F3F3F6"></div>
<div class="a" style="left:321px;top:944px;width:1505px;height:1px;background:#E4E5E9"></div>
<div class="t" style="left:485px;top:922px;font-size:13px;line-height:13px;color:#333;font-size:13.2px">Green</div>
<div class="t" style="left:742px;top:922px;font-size:13px;line-height:13px;color:#333;font-size:13.2px">Management</div>
<div class="t" style="left:892px;top:922px;font-size:13px;line-height:13px;color:#333;font-size:13.2px">Room - Management</div>
<div class="t" style="left:1071px;top:922px;font-size:13px;line-height:13px;color:#333;font-size:13.2px">Department - Management</div>
<div class="t" style="left:1282px;top:922px;font-size:13px;line-height:13px;color:#333;font-size:13.2px">EN</div>
<svg style="left:1565px;top:922px" width="16" height="12"><polyline points="1.2,5.8 5,9.5 14.5,1" fill="none" stroke="#0A7A14" stroke-width="2"/></svg>
<div class="a" style="left:321px;top:945px;width:1505px;height:30px;background:#F8F8FA"></div>
<div class="a" style="left:884px;top:945px;width:179px;height:30px;background:#F3F3F6"></div>
<div class="a" style="left:321px;top:975px;width:1505px;height:1px;background:#E4E5E9"></div>
<div class="t" style="left:485px;top:953px;font-size:13px;line-height:13px;color:#333;font-size:13.2px">Nelson</div>
<div class="t" style="left:742px;top:953px;font-size:13px;line-height:13px;color:#333;font-size:13.2px">Management</div>
<div class="t" style="left:892px;top:953px;font-size:13px;line-height:13px;color:#333;font-size:13.2px">Room - Management</div>
<div class="t" style="left:1071px;top:953px;font-size:13px;line-height:13px;color:#333;font-size:13.2px">Department - Management</div>
<div class="t" style="left:1282px;top:953px;font-size:13px;line-height:13px;color:#333;font-size:13.2px">EN</div>
<svg style="left:1565px;top:953px" width="16" height="12"><polyline points="1.2,5.8 5,9.5 14.5,1" fill="none" stroke="#0A7A14" stroke-width="2"/></svg>
<div class="a" style="left:321px;top:415px;width:1505px;height:8px;background:linear-gradient(#EDF0FC,rgba(248,248,250,0))"></div>
<svg style="left:1722px;top:385px" width="31" height="27"><polygon points="0,13.2 7,0.5 23,0.5 30,13.2 23,26 7,26" fill="#FFFFFF"/></svg>
<svg style="left:1755px;top:385px" width="31" height="27"><polygon points="0,13.2 7,0.5 23,0.5 30,13.2 23,26 7,26" fill="#FFFFFF"/></svg>
<svg style="left:1787.5px;top:385px" width="31" height="27"><polygon points="0,13.2 7,0.5 23,0.5 30,13.2 23,26 7,26" fill="#FFFFFF"/></svg>
<svg style="left:1729px;top:391px" width="17" height="14"><ellipse cx="8" cy="7" rx="6.2" ry="4.6" fill="none" stroke="#A3A8EA" stroke-width="1.8"/><circle cx="8" cy="7" r="2.7" fill="#2E2ECF"/><path d="M8,7 V4.3 A2.7,2.7 0 0 0 5.3,7z" fill="#FFFFFF"/></svg>
<svg style="left:1762px;top:391px" width="15" height="15"><path d="M6.5,2.5 H2.5 Q1.2,2.5 1.2,3.8 V12.2 Q1.2,13.5 2.5,13.5 H11 Q12.3,13.5 12.3,12.2 V8" fill="none" stroke="#3636D0" stroke-width="1.25"/><path d="M5.5,10 L6,7.5 L12,1.5 Q13,0.8 13.8,1.6 Q14.5,2.5 13.7,3.3 L7.8,9.3z" fill="none" stroke="#3636D0" stroke-width="1.2" stroke-linejoin="round"/></svg>
<svg style="left:1796px;top:391px" width="13" height="15"><path d="M0.5,3 H12.5 M4.5,3 V1.5 Q4.5,0.8 5.2,0.8 H7.8 Q8.5,0.8 8.5,1.5 V3" fill="none" stroke="#3636D0" stroke-width="1.4"/><path d="M1.8,3.5 L2.3,12.8 Q2.4,13.8 3.4,13.8 H9.6 Q10.6,13.8 10.7,12.8 L11.2,3.5" fill="none" stroke="#3636D0" stroke-width="1.4"/><path d="M4.6,5.5 V11.8 M6.5,5.5 V11.8 M8.4,5.5 V11.8" stroke="#4A66E0" stroke-width="1.1"/></svg>
<svg style="left:0;top:0" width="1872" height="966"><defs><filter id="sh" x="-30%" y="-30%" width="160%" height="160%"><feGaussianBlur in="SourceAlpha" stdDeviation="2.8"/><feOffset dx="1" dy="3"/><feComponentTransfer><feFuncA type="linear" slope="0.35"/></feComponentTransfer><feMerge><feMergeNode/><feMergeNode in="SourceGraphic"/></feMerge></filter></defs><polygon filter="url(#sh)" points="1667.7,358.4 1717.4,380.4 1718.4,374.2 1735.6,397.2 1706.2,394.7 1711.2,391.3 1669.6,361.3" fill="#94D53F"/></svg>
<div class="a" style="left:1826px;top:384px;width:10px;height:576px;background:#E7ECFC"></div>
<svg style="left:1827px;top:389px" width="8" height="5"><polygon points="4,0.5 7.5,4.5 0.5,4.5" fill="#B4B8C2"/></svg>
<div class="a" style="left:1828px;top:399px;width:6px;height:434px;background:#B5B9C4;border-radius:3px"></div>
<svg style="left:1827px;top:950px" width="8" height="5"><polygon points="0.5,0.5 7.5,0.5 4,4.5" fill="#B4B8C2"/></svg>
<div class="a" style="left:321px;top:960px;width:1515px;height:6px;background:#E7ECFC"></div>
<svg style="left:1817px;top:962px" width="5" height="8"><polygon points="0.5,0.5 4.5,4 0.5,7.5" fill="#B4B8C2"/></svg>
<div class="a" style="left:647px;top:962px;width:1163px;height:6px;background:#B5B9C4;border-radius:3px"></div>
<svg style="left:326px;top:962px" width="5" height="8"><polygon points="0.5,4 4.5,0.5 4.5,7.5" fill="#B4B8C2"/></svg>
<div class="a" style="left:1857px;top:0;width:15px;height:966px;background:#FBFBFB"></div>
<svg style="left:1860px;top:10px" width="10" height="6"><polygon points="4.5,0.5 9,5.5 0,5.5" fill="#808080"/></svg>
<div class="a" style="left:1860px;top:23px;width:9px;height:866px;background:#8A8A8A;border-radius:4.5px"></div>
<svg style="left:1860px;top:950px" width="10" height="6"><polygon points="0,0.5 9,0.5 4.5,5.5" fill="#808080"/></svg>
<svg style="left:0;top:0" width="10" height="10"><path d="M0,0 H9 Q0,0 0,9z" fill="#2a2a2a"/></svg>
<svg style="left:1862px;top:0" width="10" height="10"><path d="M10,0 H1 Q10,0 10,9z" fill="#2a2a2a"/></svg>
<svg style="left:0;top:956px" width="10" height="10"><path d="M0,10 H9 Q0,10 0,1z" fill="#2a2a2a"/></svg>
<svg style="left:1862px;top:956px" width="10" height="10"><path d="M10,10 H1 Q10,10 10,1z" fill="#2a2a2a"/></svg>
</body></html>
